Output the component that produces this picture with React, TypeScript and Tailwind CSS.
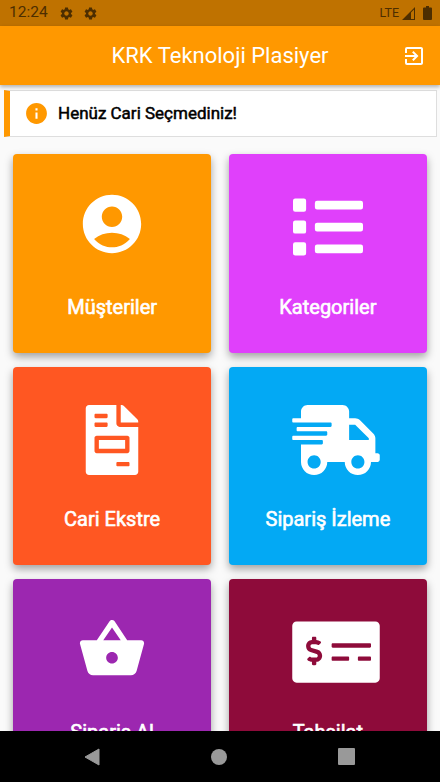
// src/App.tsx
import React from "react";
import type { IconType } from "react-icons";
import { FaFileInvoice, FaList, FaMoneyCheckAlt, FaShippingFast } from "react-icons/fa";
import {
  MdAccountCircle,
  MdExitToApp,
  MdInfo,
  MdSettings,
  MdShoppingBasket,
} from "react-icons/md";

interface MenuItem {
  title: string;
  icon: IconType;
  color: string;
  iconClass: string;
}

const menuItems: MenuItem[] = [
  {
    title: "Müşteriler",
    icon: MdAccountCircle,
    color: "bg-[#ff9800]",
    iconClass: "mt-[35px] w-[70px]",
  },
  {
    title: "Kategoriler",
    icon: FaList,
    color: "bg-[#e040fb]",
    iconClass: "mt-[38px] w-[70px]",
  },
  {
    title: "Cari Ekstre",
    icon: FaFileInvoice,
    color: "bg-[#ff5722]",
    iconClass: "mt-[38px] w-[70px]",
  },
  {
    title: "Sipariş İzleme",
    icon: FaShippingFast,
    color: "bg-[#03a9f4]",
    iconClass: "mt-[38px] ml-[17px] w-[88px]",
  },
  {
    title: "Sipariş Al",
    icon: MdShoppingBasket,
    color: "bg-[#9c27b0]",
    iconClass: "mt-[35px] w-[70px]",
  },
  {
    title: "Tahsilat",
    icon: FaMoneyCheckAlt,
    color: "bg-[#8e0b3a]",
    iconClass: "mt-[38px] ml-[17px] w-[88px]",
  },
];

const StatusBar: React.FC = () => (
  <div className="flex h-[26px] shrink-0 items-center bg-[#bf7200] pl-[9px] pr-[8px] text-[#4d2e00]">
    <span className="w-[50px] text-[15.5px] leading-none">12:24</span>
    <MdSettings className="h-[15px] w-[15px]" />
    <MdSettings className="ml-[9px] h-[15px] w-[15px]" />
    <span className="ml-auto text-[12.5px] leading-none">LTE</span>
    <svg className="ml-[3px] h-[13px] w-[13px]" viewBox="0 0 13 13">
      <path d="M13 0v13H0z M12 2.4L9 5.4V12h3z" fill="currentColor" fillRule="evenodd" />
    </svg>
    <svg className="ml-[8px] h-[14px] w-[9px]" viewBox="0 0 9 14">
      <path d="M3 0h3v1.5h2q1 0 1 1V13q0 1-1 1H1q-1 0-1-1V2.500q0-1 1-1h2z" fill="currentColor" />
    </svg>
  </div>
);

const MenuCard: React.FC<{ item: MenuItem }> = ({ item }) => {
  const Icon = item.icon;

  return (
    <div
      className={`flex h-[198.500px] flex-col items-center rounded-[4px] text-white shadow-[0_4px_8px_rgba(0,0,0,0.36)] ${item.color}`}
    >
      <Icon className={`h-[70px] shrink-0 ${item.iconClass}`} />
      <span className="mt-auto mb-[34px] text-[20px] leading-[24px] [-webkit-text-stroke:0.6px_white]">
        {item.title}
      </span>
    </div>
  );
};

const App: React.FC = () => {
  return (
    <div className="flex h-screen w-full flex-col overflow-hidden bg-[#fafafa] font-[Roboto,sans-serif]">
      <StatusBar />

      {/* App Bar */}
      <header className="z-10 flex h-[59px] shrink-0 items-center bg-[#ff9800] pr-[14px] pl-[38px] text-white shadow-[0_2px_4px_rgba(0,0,0,0.3)]">
        <h1 className="flex-1 text-center text-[22px] leading-none">KRK Teknoloji Plasiyer</h1>
        <MdExitToApp className="h-[24px] w-[24px]" />
      </header>

      {/* Selected account notice */}
      <div className="mx-[4px] mt-[5px] mr-[3px] flex h-[47px] shrink-0 items-center border border-l-[6px] border-[#dedede] border-l-[#ff9800] bg-white pl-[14px]">
        <MdInfo className="h-[25px] w-[25px] text-[#ff9800]" />
        <span className="ml-[9px] text-[17px] leading-none text-black [-webkit-text-stroke:0.5px_black]">
          Henüz Cari Seçmediniz!
        </span>
      </div>

      <main className="grid min-h-0 flex-1 auto-rows-max grid-cols-2 gap-x-[17.500px] gap-y-[14px] overflow-hidden px-[13px] pt-[17px]">
        {menuItems.map((item) => (
          <MenuCard key={item.title} item={item} />
        ))}
      </main>

      {/* System navigation */}
      <nav className="z-10 flex h-[51px] shrink-0 items-center justify-between bg-black pr-[85px] pl-[84px]">
        <svg className="h-[18px] w-[16px]" viewBox="0 0 16 18">
          <path d="M15 1v16L1 9z" fill="#999" stroke="#999" strokeLinejoin="round" />
        </svg>
        <div className="h-[16px] w-[16px] rounded-full bg-[#999]" />
        <div className="h-[17px] w-[17px] rounded-[1px] bg-[#999]" />
      </nav>
    </div>
  );
};

export default App;
